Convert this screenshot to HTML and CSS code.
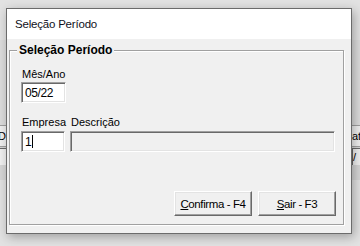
FILE: index.html
```html
<!DOCTYPE html>
<html lang="pt">
<head>
    <meta charset="UTF-8">
    <title>Seleção Período</title>
    <link rel="stylesheet" href="styles.css">
</head>
<body>

<div class="desktop">
    <div class="behind behind-left">
        <div class="behind-line"></div>
        <div class="behind-label">D</div>
        <div class="behind-box"></div>
    </div>
    <div class="behind behind-right">
        <div class="behind-line"></div>
        <div class="behind-label">at.</div>
        <div class="behind-box">/</div>
    </div>

    <div class="window">
        <div class="titlebar">Seleção Período</div>

        <div class="window-body">
            <div class="group">
                <div class="group-title">Seleção Período</div>

                <div class="field">
                    <label class="label">Mês/Ano</label>
                    <div class="input input-month">05/22</div>
                </div>

                <div class="row">
                    <div class="field">
                        <label class="label">Empresa</label>
                        <div class="input input-company">1<span class="caret"></span></div>
                    </div>
                    <div class="field field-grow">
                        <label class="label">Descrição</label>
                        <div class="input input-disabled"></div>
                    </div>
                </div>

                <div class="buttons">
                    <button class="btn"><u>C</u>onfirma - F4</button>
                    <button class="btn"><u>S</u>air - F3</button>
                </div>
            </div>
        </div>
    </div>
</div>

</body>
</html>
```

FILE: styles.css
```css
body {
    margin: 0;
    font-family: "Liberation Sans", Arial, sans-serif;
    font-size: 12px;
    color: #000;
    background-color: #e2e2e2;
}

.desktop {
    position: relative;
    width: 360px;
    height: 246px;
    overflow: hidden;
    padding: 8px 0 0 6px;
    box-sizing: border-box;
}

/* pieces of the application window behind the dialog */
.behind {
    position: absolute;
    top: 40px;
    width: 14px;
    height: 140px;
    background-color: #d6d6d6;
    font-size: 11px;
}

.behind-left {
    left: -8px;
    border-right: 1px solid #a0a0a0;
}

.behind-right {
    right: -6px;
}

.behind-line {
    height: 85px;
    border-bottom: 1px solid #a0a0a0;
    background-color: #dcdcdc;
}

.behind-label {
    height: 20px;
    line-height: 20px;
    padding-left: 6px;
    border-bottom: 1px solid #a0a0a0;
    background-color: #f0f0f0;
}

.behind-right .behind-label {
    padding-left: 0;
}

.behind-box {
    height: 16px;
    line-height: 16px;
    margin-top: 1px;
    background-color: #f0f0f0;
    border-top: 1px solid #696969;
    border-left: 1px solid #696969;
}

.window {
    width: 346px;
    height: 226px;
    box-sizing: border-box;
    border: 1px solid #6b6b6b;
    background-color: #f0f0f0;
    box-shadow: 2px 3px 10px rgba(0, 0, 0, 0.3);
    position: relative;
    display: flex;
    flex-direction: column;
}

.titlebar {
    height: 30px;
    line-height: 30px;
    padding-left: 8px;
    background-color: #fff;
    font-size: 11.5px;
    letter-spacing: -0.2px;
    color: #101020;
}

.window-body {
    flex: 1;
    padding: 11px 7px 7px 2px;
}

.group {
    position: relative;
    height: 175px;
    box-sizing: border-box;
    border: 1px solid #a0a0a0;
    box-shadow: inset 1px 1px 0 #fff, 1px 1px 0 #fff;
    padding: 16px 7px 0 11px;
}

.group-title {
    position: absolute;
    top: -8px;
    left: 7px;
    padding: 0 2px;
    background-color: #f0f0f0;
    font-weight: bold;
    line-height: 14px;
}

.label {
    display: block;
    line-height: 14px;
    font-size: 11px;
    padding-left: 1px;
}

.field {
    display: flex;
    flex-direction: column;
    gap: 1px;
}

.field-grow {
    flex: 1;
}

.row {
    display: flex;
    gap: 4px;
    margin-top: 12px;
}

.input {
    height: 21px;
    box-sizing: border-box;
    border: 1px solid;
    border-color: #a0a0a0 #fff #fff #a0a0a0;
    box-shadow: inset 1px 1px 0 #696969, inset -1px -1px 0 #e3e3e3;
    background-color: #fff;
    padding: 3px 0 0 3px;
    line-height: 14px;
    letter-spacing: -0.4px;
}

.input-month {
    width: 45px;
}

.input-company {
    width: 44px;
    height: 21px;
    margin-top: 1px;
}

.input-disabled {
    height: 21px;
    margin-top: 1px;
    margin-right: 1px;
    background-color: #f0f0f0;
}

.caret {
    display: inline-block;
    width: 1px;
    height: 13px;
    background-color: #000;
    vertical-align: -2px;
    margin-left: 1px;
}

.buttons {
    display: flex;
    justify-content: flex-end;
    gap: 6px;
    margin-top: 39px;
}

.btn {
    width: 78px;
    height: 25px;
    box-sizing: border-box;
    border: 1px solid;
    border-color: #fff #696969 #696969 #fff;
    box-shadow: inset -1px -1px 0 #a0a0a0, inset 1px 1px 0 #e3e3e3;
    background-color: #f0f0f0;
    font-family: "Liberation Sans", Arial, sans-serif;
    font-size: 11.5px;
    letter-spacing: -0.4px;
    color: #000;
    padding: 0;
}
```
